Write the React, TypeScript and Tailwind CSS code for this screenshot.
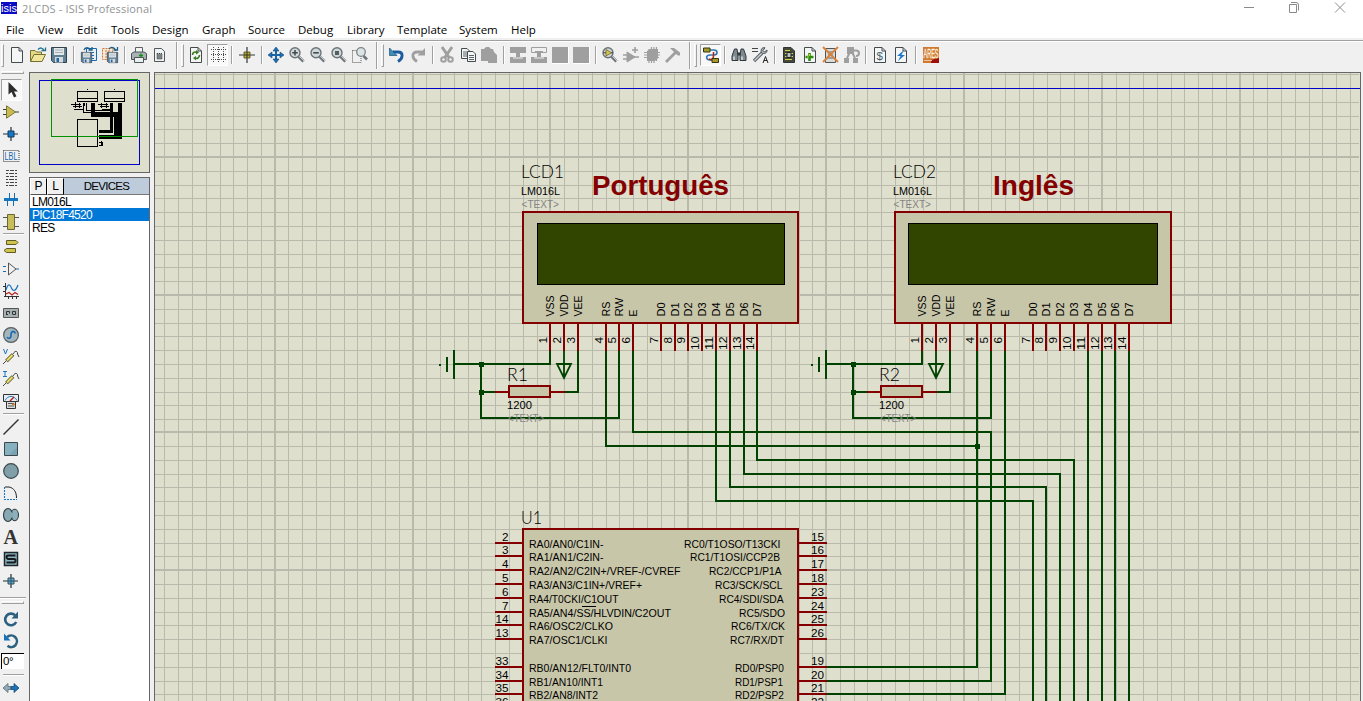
import React from "react";

type Kids = { children?: React.ReactNode };

/* ---------- icon helpers ---------- */

function Ic({ children }: Kids) {
  return (
    <svg className="block h-4 w-4 shrink-0 overflow-visible" viewBox="0 0 16 16" fill="none">
      {children}
    </svg>
  );
}

const page = "M2.5 .5H10L13.5 4V15.5H2.5Z";

function Page({ children }: Kids) {
  return (
    <Ic>
      <path d={page} fill="#f4f6f6" stroke="#444b4f" />
      <path d="M10 .5V4H13.5" stroke="#444b4f" />
      {children}
    </Ic>
  );
}

function Lens({ children }: Kids) {
  return (
    <Ic>
      <path d="M9.5 9.5L14.5 14.5" stroke="#6e7478" strokeWidth="3" />
      <path d="M10 9L15 14" stroke="#c9ced0" strokeWidth="1" />
      <circle cx="6" cy="5.8" r="5" fill="#cfd9db" stroke="#6c7377" strokeWidth="1.4" />
      {children}
    </Ic>
  );
}

function Disk({ x, y, s }: { x: number; y: number; s: number }) {
  return (
    <g transform={`translate(${x} ${y}) scale(${s / 16})`}>
      <path d="M.5 .5H15.5V15.5H2.5L.5 13.5Z" fill="#5f7f94" stroke="#33434e" />
      <path d="M3 1H13V8H3Z" fill="#e3e8ea" />
      <path d="M4 3H12M4 5.5H12" stroke="#a7b0b5" />
      <path d="M4 10H12V15.5H4Z" fill="#d5dadd" />
      <path d="M5.5 11H8V15H5.5Z" fill="#1d67a8" />
    </g>
  );
}

const G = "#9f9f9f";

const icons: Record<string, React.ReactNode> = {
  new: <Page />,
  open: (
    <Ic>
      <path d="M.5 14.5V3.5H5L6.5 5H11.5V8" fill="#e4d886" stroke="#77712f" />
      <path d="M.5 14.5L4 7.5H15.5L12 14.5Z" fill="#f0e59a" stroke="#77712f" />
      <path d="M8 2.5C10 .3 13 .5 14 3.5M11.5 3.5H15.5V.5" stroke="#22708e" strokeWidth="1.3" />
    </Ic>
  ),
  save: (
    <Ic>
      <Disk x={0} y={0} s={16} />
    </Ic>
  ),
  importSec: (
    <Ic>
      <path d="M5.500 1.500H15.500V13.500H5.500Z" fill="#e9f0f5" stroke="#1769b4" />
      <path d="M8 5.500H14M8 8.500H14M8 11.500H14" stroke="#1769b4" strokeDasharray="2 1" />
      <path d="M3 3C4 0 8 0 9.500 3M7.500 3H11V0" stroke="#1c5e86" strokeWidth="1.300" />
      <Disk x={0} y={5} s={11} />
    </Ic>
  ),
  exportSec: (
    <Ic>
      <path d="M.5 1.500H10.500V12.500H.5Z" fill="#f3e6da" stroke="#d6762c" strokeDasharray="2 1" />
      <path d="M3 4H9M3 7H9M3 10H9" stroke="#d6762c" strokeDasharray="2 1" />
      <path d="M7 2C9 -.5 13 0 13.500 4M11.500 3H15.500V0" stroke="#1c5e86" strokeWidth="1.300" />
      <Disk x={5} y={5} s={11} />
    </Ic>
  ),
  print: (
    <Ic>
      <path d="M4.500 6V.5H11.500V6" fill="#f3f5f5" stroke="#5a6165" />
      <path d="M.5 6.500L3 5H13L15.500 6.500V12.500H.5Z" fill="#a9b1b4" stroke="#4d5458" />
      <path d="M3.500 10.500H12.500V15.500H3.500Z" fill="#eceff0" stroke="#4d5458" />
      <path d="M10 6.500V10.500M8 8.500H12" stroke="#119011" strokeWidth="1.300" />
    </Ic>
  ),
  printArea: (
    <Ic>
      <path d="M2.500 1.500H9.500L12.500 4.500V14.500H2.500Z" fill="#eff2f2" stroke="#50575b" />
      <path d="M5 6.500H10V12H5Z" fill="#7c8588" stroke="#444" strokeDasharray="1 1" />
    </Ic>
  ),
  refresh: (
    <Page>
      <path d="M4.500 8C4.500 5 7 4.500 9 5.500M11.500 8C11.500 11 9 12 7 11" stroke="#3b7d1f" strokeWidth="1.600" />
      <path d="M8 3V7.500L11 5.500ZM8 9V13.500L5 11Z" fill="#3b7d1f" />
    </Page>
  ),
  grid: (
    <Ic>
      <path d="M1 2.500H16M1 7.500H16M1 12.500H16" stroke="#4a4a4a" strokeDasharray="1 1" />
      <path d="M3.500 0V16M8.500 0V16M13.500 0V16" stroke="#4a4a4a" strokeDasharray="1 1" />
    </Ic>
  ),
  origin: (
    <Ic>
      <path d="M8 0V16M0 8H16" stroke="#33363a" strokeWidth="1.200" />
      <path d="M5 5H11V11H5Z" fill="#b3a845" stroke="#655e26" />
      <path d="M8 5V11M5 8H11" stroke="#393715" />
    </Ic>
  ),
  pan: (
    <Ic>
      <path d="M8 1V15M1 8H15" stroke="#1867a8" strokeWidth="2" />
      <path d="M8 0L11 4H5ZM8 16L11 12H5ZM0 8L4 5V11ZM16 8L12 5V11Z" fill="#1e70b2" stroke="#174b78" strokeWidth=".6" />
    </Ic>
  ),
  zoomIn: (
    <Lens>
      <path d="M6 3V8.600M3.200 5.800H8.800" stroke="#444b50" strokeWidth="1.600" />
    </Lens>
  ),
  zoomOut: (
    <Lens>
      <path d="M3.200 5.800H8.800" stroke="#444b50" strokeWidth="1.600" />
    </Lens>
  ),
  zoomAll: (
    <Lens>
      <path d="M4 4H8V8H4Z" fill="#555d61" />
    </Lens>
  ),
  zoomArea: (
    <Ic>
      <path d="M.5 3.500H9V15.500H.5Z" stroke="#555" strokeDasharray="1 1" />
      <path d="M11.500 9L15 12.500" stroke="#6e7478" strokeWidth="2.600" />
      <circle cx="9" cy="5" r="4.300" fill="#dbe3e5" stroke="#7c8387" strokeWidth="1.300" />
    </Ic>
  ),
  undo: (
    <Ic>
      <path d="M4 5H9C14.500 5 14.500 11 9 14.500" stroke="#1b5da0" strokeWidth="2.800" />
      <path d="M.5 1V8.500H8Z" fill="#3f8fb8" stroke="#1b4f78" strokeWidth=".7" />
    </Ic>
  ),
  redo: (
    <Ic>
      <path d="M12 5H7C1.500 5 1.500 11 7 14.500" stroke={G} strokeWidth="2.800" />
      <path d="M15 1V8.500H7.500Z" fill={G} />
    </Ic>
  ),
  cut: (
    <Ic>
      <path d="M3 0L10.500 11M13 0L5.500 11" stroke={G} strokeWidth="3" />
      <circle cx="4.500" cy="12.500" r="2.300" stroke={G} strokeWidth="2" />
      <circle cx="11.500" cy="12.500" r="2.300" stroke={G} strokeWidth="2" />
    </Ic>
  ),
  copy: (
    <Ic>
      <path d="M1.500 1.500H7L9.500 4V11.500H1.500Z" fill="#f3f5f5" stroke="#444b4f" />
      <path d="M3 5H7M3 7H7M3 9H7" stroke="#5b6468" />
      <path d="M7.500 4.500H13L15.500 7V14.500H7.500Z" fill="#f3f5f5" stroke="#444b4f" />
      <path d="M9 8.500H14M9 10.500H14M9 12.500H14" stroke="#5b6468" />
    </Ic>
  ),
  paste: (
    <Ic>
      <path d="M0 2H3L5 0H8L10 2H12L13 5L16 8V16H7V14H0Z" fill={G} />
    </Ic>
  ),
  blockCopy: (
    <Ic>
      <path d="M0 0H16V6H10V10H16V16H0V10H6V6H0Z" fill={G} />
      <path d="M3 11H13" stroke="#f0f0f0" />
    </Ic>
  ),
  blockMove: (
    <Ic>
      <path d="M.5 .5H15.500V5.500H.5Z" stroke={G} />
      <path d="M4 4H12V6H10V10H16V16H0V10H6V6H4Z" fill={G} />
      <path d="M3 11H13" stroke="#f0f0f0" />
    </Ic>
  ),
  block: (
    <Ic>
      <path d="M0 0H16V16H0Z" fill={G} />
      <path d="M0 16.500H16.500V0" stroke="#fff" />
    </Ic>
  ),
  pick: (
    <Lens>
      <path d="M4 2.500V9L9.500 5.800Z" fill="#d5c94f" stroke="#6c6727" strokeWidth=".8" />
      <path d="M1 5.800H4M9 5.800H11" stroke="#444" />
    </Lens>
  ),
  make: (
    <Ic>
      <path d="M4 5V15L12 10Z" fill={G} stroke={G} />
      <path d="M0 8H4M0 12H4M11 10H16M12 0V6M9 3H15" stroke={G} strokeWidth="1.600" />
    </Ic>
  ),
  pack: (
    <Ic>
      <path d="M3 4L6 2H14V11L11 14H3Z" fill={G} />
      <path d="M5 2V16M7.500 0V16M10 0V16M12.500 0V14M0 5.500H16M0 8H16M0 10.500H15" stroke={G} strokeWidth="1.200" />
    </Ic>
  ),
  hammer: (
    <Ic>
      <path d="M1 15L11 5" stroke={G} strokeWidth="2.800" />
      <path d="M5 1H9L15 5.500V8.500H13L11 7L8 4Z" fill={G} />
    </Ic>
  ),
  wire: (
    <Ic>
      <path d="M7 3H11C15 3 15 8 11 8H7C2 8 3 13 7 13H9" stroke="#2f78b4" strokeWidth="1.600" />
      <path d="M10.500 5V9C10.500 12.500 8 13 6 12" stroke="#bd2418" strokeWidth="1.600" />
      <path d="M.5 1H7V5H.5ZM9 11.500H15.500V15.500H9Z" fill="#a49b2b" stroke="#38350d" />
    </Ic>
  ),
  find: (
    <Ic>
      <path d="M3.500 2H6L7 8V13.500H1V9ZM12.500 2H10L9 8V13.500H15V9Z" fill="#7f8a90" stroke="#30373b" />
      <path d="M6.500 5.500H9.500V8.500H6.500Z" fill="#30373b" />
      <path d="M3 9.500V13M11 9.500V13" stroke="#dce1e3" strokeWidth="1.500" />
    </Ic>
  ),
  property: (
    <Ic>
      <path d="M0 1.500H6M0 4.500H6" stroke="#444" />
      <path d="M2 14L10 6" stroke="#5c6468" strokeWidth="3.400" />
      <path d="M2.500 13.500L10 6" stroke="#cdd3d5" strokeWidth="1.200" />
      <path d="M13 .8C9.500 0 8.500 3 9.500 6C12 7.500 15.500 6 15 3L12.500 5L11 3.500Z" fill="#aab1b5" stroke="#4c5357" />
      <path d="M11 16L13.500 9.500L16 16M12 13.500H15" stroke="#222" />
    </Ic>
  ),
  explorer: (
    <Ic>
      <path d="M2.500 .5H10L13.500 4V15.500H2.500Z" fill="#444a3a" stroke="#2e3335" />
      <path d="M4 3.500H9M4 6.500H6M4 9.500H6M4 12.500H11M10 6.500H12M10 9.500H12" stroke="#dccf4b" />
      <path d="M6 5.500H10V10.500H6Z" fill="#b8c3c8" stroke="#202426" />
    </Ic>
  ),
  newSheet: (
    <Page>
      <path d="M7.500 6V14M3.500 10H11.500" stroke="#2a8d12" strokeWidth="2.600" />
      <path d="M7.500 7V9M5 10H7" stroke="#d6cf2a" strokeWidth="1.200" />
    </Page>
  ),
  delSheet: (
    <Ic>
      <path d="M2.500 1.500H12.500V15.500H2.500Z" fill="#d7dbdc" stroke="#50575b" />
      <path d="M5 5H10M5 8H10M5 11H10" stroke="#666" />
      <path d="M0 0L15 15M15 0L0 15" stroke="#d9823b" strokeWidth="1.900" />
    </Ic>
  ),
  parent: (
    <Ic>
      <path d="M3 0H10V7H3ZM0 11H5V16H0ZM9 11H14V16H9Z" fill={G} />
      <path d="M10 3.500H12C16 3.500 16 9 12 9M6 5L3 11M8 5L11 11" stroke={G} strokeWidth="2" />
    </Ic>
  ),
  bom: (
    <Page>
      <text x="4.500" y="12.500" fontSize="11.500" fontFamily="Liberation Sans" fill="#43616e">$</text>
    </Page>
  ),
  erc: (
    <Page>
      <path d="M11 3L4 9H7.500L5 14L12 8H8.500Z" fill="#1f79c6" />
    </Page>
  ),
  ares: (
    <Ic>
      <path d="M0 0H16V16H0Z" fill="#cf7a30" />
      <path d="M8 16V13L16 11V16Z" fill="#9d0f0b" />
      <text x=".6" y="11" fontSize="12" textLength="14.800" lengthAdjust="spacingAndGlyphs" fontFamily="Liberation Sans" fill="#fff3e0" stroke="#fff3e0" strokeWidth=".3">ARES</text>
      <path d="M1 13.500H9" stroke="#f0c79d" />
    </Ic>
  ),
  /* mode column */
  select: (
    <Ic>
      <path d="M4.500 0V12.500L7.500 10L10 15.500L12.500 14.300L10 9.500H14Z" fill="#2c2c2e" />
    </Ic>
  ),
  component: (
    <Ic>
      <path d="M0 5.500H4M0 10.500H4M12 8H16" stroke="#3c3c30" />
      <path d="M3.500 1.800V14.200L12.500 8Z" fill="#c9bd50" stroke="#7d7538" />
    </Ic>
  ),
  junction: (
    <Ic>
      <path d="M8 1V15M0 8H15" stroke="#262d33" strokeWidth="1.200" />
      <path d="M5 5H11V11H5Z" fill="#1578c4" stroke="#153b5c" />
    </Ic>
  ),
  label: (
    <Ic>
      <path d="M.5 2.500H16V13.500H.5Z" stroke="#333" strokeDasharray="1 1" />
      <text x="1.500" y="12" fontSize="10.500" textLength="13" lengthAdjust="spacingAndGlyphs" fontFamily="Liberation Sans" fill="#1467ad">LBL</text>
    </Ic>
  ),
  script: (
    <Ic>
      <path d="M3 .5H14M3 6.500H14M3 12.500H14" stroke="#444" strokeDasharray="3 1 4 1" />
      <path d="M3 3.500H14M3 9.500H14M3 15.500H14" stroke="#444" strokeDasharray="2 1 5 1" />
    </Ic>
  ),
  bus: (
    <Ic>
      <path d="M1 7.500H15" stroke="#1578c4" strokeWidth="3" />
      <path d="M6.500 1V8M11.500 1V8M4.500 8V14M10.500 8V14" stroke="#1b6ca9" />
    </Ic>
  ),
  subcircuit: (
    <Ic>
      <path d="M0 3.500H4M0 12.500H4M12 3.500H16M12 12.500H16" stroke="#555" />
      <path d="M4.500 .5H11.500V15.500H4.500Z" fill="#c7bd5a" stroke="#6d6733" />
    </Ic>
  ),
  terminal: (
    <Ic>
      <path d="M3.500 1.500H13L15 3.500L13 5.500H3.500ZM12.500 9.500H3.500L1 11.500L3.500 13.500H12.500Z" fill="#cfc448" stroke="#5f5a2c" />
    </Ic>
  ),
  pin: (
    <Ic>
      <path d="M0 5.500H3M0 10.500H3M13 8H16" stroke="#1b6ca9" strokeWidth="1.200" />
      <path d="M5.500 2V14L13 8Z" stroke="#555" />
    </Ic>
  ),
  graph: (
    <Ic>
      <path d="M2.500 0V14M1 13.500H16M0 3.500H2M0 8.500H2M5.500 14V16M9.500 14V16M13.500 14V16" stroke="#333" />
      <path d="M3 7C5 0 7 1 8.500 5S13 8 15 2" stroke="#1a75c2" strokeWidth="1.200" />
      <path d="M3 11L6 9.500L9 12L12 9.500L15 11.500" stroke="#b32121" strokeWidth="1.200" />
    </Ic>
  ),
  tape: (
    <Ic>
      <path d="M.5 3.500H15.500V12.500H.5Z" fill="#a7aeb0" stroke="#555" />
      <path d="M3.500 9.500V6.500H6.500V8.500M9.500 9.500V6.500H12.500V9.500H10M5 9.500H3" stroke="#2f3335" />
    </Ic>
  ),
  generator: (
    <Ic>
      <circle cx="8" cy="8" r="7.400" fill="#a3b4bb" stroke="#555e63" strokeWidth="1.200" />
      <path d="M4 10C5 12 8 12 8 8S11 3 12.500 6.500" stroke="#1769b4" strokeWidth="1.600" />
    </Ic>
  ),
  vprobe: (
    <Ic>
      <path d="M.5 0L2.500 5L4.500 0" stroke="#1a75c2" />
      <path d="M0 15L3 12M10 5C12 1 15 2 14.500 5L16 8" stroke="#444" />
      <path d="M3.500 12L10 5.500" stroke="#56522c" strokeWidth="3.800" />
      <path d="M4 11.500L9.500 6" stroke="#e8df68" strokeWidth="2.200" />
    </Ic>
  ),
  iprobe: (
    <Ic>
      <path d="M0 .5H4M2 0V5M0 5.500H4" stroke="#1a75c2" />
      <path d="M0 15L3 12M10 5C12 1 15 2 14.500 5L16 8" stroke="#444" />
      <path d="M3.500 12L10 5.500" stroke="#56522c" strokeWidth="3.800" />
      <path d="M4 11.500L9.500 6" stroke="#e8df68" strokeWidth="2.200" />
    </Ic>
  ),
  instrument: (
    <Ic>
      <path d="M.5 1.500H15.500V8.500H.5Z" fill="#e7edf0" stroke="#333" />
      <path d="M2 7.500C5 2 11 2 14 7.500" stroke="#2b78bb" />
      <path d="M7 8L11 4" stroke="#b32121" strokeWidth="1.400" />
      <path d="M3.500 8.500H12.500V15.500H3.500Z" fill="#d8dcdd" stroke="#333" />
      <path d="M5 10.500H11M5 13H11" stroke="#555" />
      <path d="M9 11.500H12" stroke="#df8527" strokeWidth="1.500" />
    </Ic>
  ),
  line: (
    <Ic>
      <path d="M.5 15.500L15.500 .5" stroke="#333" strokeWidth="1.500" />
    </Ic>
  ),
  box: (
    <Ic>
      <path d="M1.500 1.500H14.500V14.500H1.500Z" fill="#86b1bf" stroke="#3c484d" />
      <path d="M6 14L14 6V14Z" fill="#79a3b0" />
    </Ic>
  ),
  circle: (
    <Ic>
      <circle cx="8" cy="8" r="7.300" fill="#819fa8" stroke="#3c484d" strokeWidth="1.200" />
    </Ic>
  ),
  arc: (
    <Ic>
      <path d="M1.500 2V14.500H14" stroke="#1a75c2" strokeDasharray="2 1" strokeWidth="1.100" />
      <path d="M2 2H6C11 3 13.500 7 13.500 13" stroke="#222" />
    </Ic>
  ),
  path: (
    <Ic>
      <ellipse cx="11.700" cy="8" rx="3.800" ry="5.700" fill="#8cb1bc" stroke="#333c40" strokeWidth="1.100" />
      <ellipse cx="5" cy="8" rx="4.500" ry="6.500" fill="#86a9b3" stroke="#333c40" strokeWidth="1.100" />
      <path d="M8 5.500H10V10.500H8Z" fill="#86a9b3" />
    </Ic>
  ),
  text: (
    <Ic>
      <text x=".5" y="15" fontSize="20" fontWeight="700" textLength="14.500" lengthAdjust="spacingAndGlyphs" fontFamily="Liberation Serif" fill="#333">A</text>
    </Ic>
  ),
  symbol: (
    <Ic>
      <path d="M1.500 1.500H14.500V14.500H1.500Z" fill="#8ab4c1" stroke="#1e2629" strokeWidth="1.500" />
      <path d="M12.500 4.500H5Q3.500 4.500 3.500 6T5 8H11Q12.500 8 12.500 9.800T11 11.500H3.500" stroke="#15191b" strokeWidth="2" />
    </Ic>
  ),
  marker: (
    <Ic>
      <path d="M8 1V15M0 8H15" stroke="#262d33" strokeWidth="1.200" />
      <path d="M5 5H11V11H5Z" fill="#6ba5bd" stroke="#355262" />
      <path d="M8 5V11M5 8H11" stroke="#1e5676" />
    </Ic>
  ),
  rotCw: (
    <Ic>
      <path d="M12 4.200A5.800 5.800 0 1 0 13.200 11" stroke="#2b6080" strokeWidth="2.600" />
      <path d="M15 .5V7.500H8.500Z" fill="#2b6080" />
    </Ic>
  ),
  rotCcw: (
    <Ic>
      <path d="M4 4.200A5.800 5.800 0 1 1 4.500 12.800" stroke="#2b6080" strokeWidth="2.600" />
      <path d="M1 .5V7.500H7.500Z" fill="#1b71b8" />
    </Ic>
  ),
  flip: (
    <Ic>
      <path d="M0 8L5 3.500V6.500H8V9.500H5V12.500Z" fill="#90a9b5" stroke="#5b6e77" strokeWidth=".8" />
      <path d="M16 8L11 3.500V6.500H8V9.500H11V12.500Z" fill="#1b71b8" stroke="#174b78" strokeWidth=".8" />
    </Ic>
  ),
};

const pressed = "-my-[3px] flex h-[22px] w-[21px] items-center justify-center border border-t-[#a0a0a0] border-l-[#a0a0a0] border-r-white border-b-white bg-[#f8f8f8]";

function Group({ names, on }: { names: string[]; on?: string }) {
  return (
    <div className="flex shrink-0 items-center gap-[5px]">
      {names.map((n, i) =>
        n === on ? (
          <div key={i} className="-mr-[3px] -ml-[2px]">
            <div className={pressed}>{icons[n]}</div>
          </div>
        ) : (
          <React.Fragment key={i}>{icons[n]}</React.Fragment>
        ),
      )}
    </div>
  );
}

function Sep({ w }: { w: string }) {
  return (
    <div className={`flex shrink-0 justify-center ${w}`}>
      <div className="h-[18px] w-[2px] border-r border-white bg-[#a0a0a0]" />
    </div>
  );
}

function Break({ w }: { w: string }) {
  return (
    <div className={`flex shrink-0 items-center pl-[8px] ${w}`}>
      <div className="h-[27px] w-[2px] border-r border-white bg-[#a0a0a0]" />
      <div className="ml-[3px] h-[23px] w-[3px] border border-t-white border-l-white border-r-[#a0a0a0] border-b-[#a0a0a0]" />
    </div>
  );
}

function Toolbar() {
  return (
    <div className="flex h-[29px] shrink-0 items-center pb-[3px]">
      <div className="mr-[5px] ml-px h-[23px] w-[3px] shrink-0 border border-t-white border-l-white border-r-[#a0a0a0] border-b-[#a0a0a0]" />
      <Group names={["new", "open", "save"]} />
      <Sep w="w-[14px]" />
      <Group names={["importSec", "exportSec"]} />
      <Sep w="w-[13px]" />
      <Group names={["print", "printArea"]} />
      <Break w="w-[20px]" />
      <Group names={["refresh", "grid"]} on="grid" />
      <Sep w="w-[14px]" />
      <Group names={["origin"]} />
      <Sep w="w-[13px]" />
      <Group names={["pan", "zoomIn", "zoomOut", "zoomAll", "zoomArea"]} />
      <Break w="w-[21px]" />
      <Group names={["undo", "redo"]} />
      <Sep w="w-[13px]" />
      <Group names={["cut", "copy", "paste"]} />
      <Sep w="w-[13px]" />
      <Group names={["blockCopy", "blockMove", "block", "block"]} />
      <Sep w="w-[13px]" />
      <Group names={["pick", "make", "pack", "hammer"]} />
      <Break w="w-[21px]" />
      <Group names={["wire"]} on="wire" />
      <Sep w="w-[13px]" />
      <Group names={["find", "property"]} />
      <Sep w="w-[13px]" />
      <Group names={["explorer", "newSheet", "delSheet", "parent"]} />
      <Sep w="w-[12px]" />
      <Group names={["bom", "erc"]} />
      <Sep w="w-[14px]" />
      <Group names={["ares"]} />
    </div>
  );
}

function Modes({ names, on }: { names: string[]; on?: string }) {
  return (
    <div className="flex shrink-0 flex-col">
      {names.map((n) => (
        <div key={n} className="flex h-[22px] w-[23px] shrink-0 items-center pl-[3px]">
          {n === on ? <div className="-ml-[2px]"><div className={pressed}>{icons[n]}</div></div> : icons[n]}
        </div>
      ))}
    </div>
  );
}

function Rule() {
  return <div className="ml-[3px] h-[2px] w-[21px] shrink-0 border-t border-[#a0a0a0] bg-white" />;
}

function ModeBar() {
  return (
    <div className="flex w-[29px] shrink-0 flex-col">
      <div className="-mt-px mb-[5px] ml-px h-[3px] w-[23px] shrink-0 border border-t-white border-l-white border-r-[#a0a0a0] border-b-[#a0a0a0]" />
      <Modes names={["select", "component", "junction", "label", "script", "bus", "subcircuit"]} on="select" />
      <div className="h-[3px] shrink-0"><Rule /></div>
      <Modes names={["terminal", "pin", "graph", "tape", "generator", "vprobe", "iprobe", "instrument"]} />
      <div className="h-[4px] shrink-0 pt-px"><Rule /></div>
      <Modes names={["line", "box", "circle", "arc", "path", "text", "symbol", "marker"]} />
      <div className="flex h-[16px] shrink-0 flex-col pt-[5px]">
        <div className="h-[2px] w-[26px] border-b border-white bg-[#a0a0a0]" />
        <div className="mt-[2px] ml-px h-[3px] w-[23px] border border-t-white border-l-white border-r-[#a0a0a0] border-b-[#a0a0a0]" />
      </div>
      <Modes names={["rotCw", "rotCcw"]} />
      <div className="mt-px ml-px flex h-[16px] w-[23px] shrink-0 items-center border-t border-l border-black bg-white pl-px font-['Liberation_Sans'] text-[11.5px] leading-none tracking-[-0.5px] text-black">
        0°
      </div>
      <div className="h-[8px] shrink-0 pt-[5px]"><Rule /></div>
      <Modes names={["flip"]} />
    </div>
  );
}

function Overview() {
  return (
    <div className="h-[101px] w-[121px] shrink-0 border border-[#666] bg-[#dfdfcd]">
      <svg className="block h-[99px] w-[119px]" viewBox="30 73 119 99" shapeRendering="crispEdges" fill="none">
        <path d="M39.500 80.500H139.500V164.500H39.500Z" stroke="#0000c8" />
        <g stroke="#000">
          <path d="M77.500 91.500H97.500V101.500H77.500ZM104.500 91.500H124.500V101.500H104.500ZM77 98.500H98M104 98.500H125M77.500 119.500H97.500V146.500H77.500Z" />
          <path d="M87 89.500H88M114 89.500H115M71 104.500H81M73 106.500H82M74 109.500H83M98 104.500H108M100 106.500H109M102 109.500H110M83.500 103V112.500H113M86 103V110.500H110M84.500 103V106M79.500 103V108M75.500 102V108M101.500 103V108M106.500 103V108" />
          <path d="M99 142.500H102V145.500H99M101 141V145" />
        </g>
        <g fill="#000">
          <path d="M91 103H95V112H118V103H122V139H99V135H114V133H99V130H110V117H91Z" />
          <path d="M110 103H113V133H110Z" />
        </g>
        <path d="M113.500 117V134" stroke="#dfdfcd" />
        <path d="M51.500 79.500H137.500V136.500H51.500Z" stroke="#009000" />
      </svg>
    </div>
  );
}

function Devices() {
  return (
    <div className="mt-[4px] flex w-[121px] grow flex-col border-x border-t border-[#666] bg-white font-['Liberation_Sans'] text-[12px] text-black">
      <div className="flex h-[17px] shrink-0 bg-[#bdcbda] leading-[15px]">
        {["P", "L"].map((t) => (
          <div key={t} className="w-[17px] shrink-0 border border-t-white border-l-white border-r-black border-b-[#555] bg-[#f0f0f0] text-center">
            {t}
          </div>
        ))}
        <div className="grow border-b border-[#777] text-center text-[11.5px] leading-[16px] tracking-[-0.7px]">DEVICES</div>
      </div>
      <div className="text-[12px] leading-[14px] tracking-[-0.75px]">
        <div className="h-[13px] pl-[2px]">LM016L</div>
        <div className="h-[13px] bg-[#0078d7] pl-[2px] text-white">PIC18F4520</div>
        <div className="h-[13px] pl-[2px]">RES</div>
      </div>
    </div>
  );
}

/* ---------- schematic ---------- */

const GX0 = 550.87;
const GXS = 13.785;
const gridX = Array.from({ length: 88 }, (_, i) => i - 28).map((k) => ({ k, x: Math.floor(GX0 + k * GXS) }));
const gridY = [
  74, 88, 102, 116, 129, 143, 157, 171, 185, 198, 212, 226, 240, 254, 267, 281, 295, 309, 323, 336, 350, 364, 378,
  392, 405, 419, 432, 446, 460, 474, 487, 501, 515, 529, 543, 556, 570, 584, 598, 612, 625, 639, 653, 667, 681, 694,
];

function T({ x, y, x2, s = 11, fill = "#000", up, bold, thin, children }: {
  x: number; y: number; x2: number; s?: number; fill?: string; up?: boolean; bold?: boolean; thin?: boolean; children: string;
}) {
  return (
    <text
      x={x}
      y={y}
      fontSize={s}
      fill={fill}
      fontFamily={thin ? "Lato, 'Liberation Sans', sans-serif" : undefined}
      fontWeight={bold ? 700 : thin ? 300 : 400}
      textLength={x2 - x}
      lengthAdjust="spacingAndGlyphs"
      transform={up ? `rotate(-90 ${x} ${y})` : undefined}
    >
      {children}
    </text>
  );
}

const pinNames = ["VSS", "VDD", "VEE", "RS", "RW", "E", "D0", "D1", "D2", "D3", "D4", "D5", "D6", "D7"];
const nameLen = [21, 22, 21, 15, 19, 7, 14, 14, 14, 14, 14, 14, 14, 14];

function Lcd({ pins, left, right, s1, s2, id, title, tx, tx2 }: {
  pins: number[]; left: number; right: number; s1: number; s2: number; id: string; title: string; tx: number; tx2: number;
}) {
  const o = pins[0];
  const tl = o - 28;
  return (
    <g>
      <rect x={left} y={212} width={right - left} height={111} fill="#c8c6a9" stroke="#840000" strokeWidth={2} />
      <rect x={s1 + 0.5} y={223.5} width={s2 - s1 - 1} height={61} fill="#314500" stroke="#000" />
      {pins.map((p, i) => (
        <g key={p}>
          <path d={`M${p} 324V351`} stroke="#840000" strokeWidth={2} />
          <T up x={p + 4} y={316.5} x2={p + 4 + nameLen[i]}>{pinNames[i]}</T>
          <T up x={p - 3} y={i > 8 ? 350 : 343.5} x2={p - 3 + (i > 8 ? 13.5 : 6.5)} s={11.5}>{String(i + 1)}</T>
        </g>
      ))}
      <T x={tl - 1} y={178} x2={tl + 42} s={17} thin>{"LCD" + id}</T>
      <T x={tl - 1} y={195} x2={tl + 38} s={11}>LM016L</T>
      <T x={tl - 0.5} y={208} x2={tl + 37} s={10.5} fill="#848484">{"<TEXT>"}</T>
      <T x={tx} y={195} x2={tx2} s={27.5} fill="#840000" bold>{title}</T>
      <g stroke="#004200" strokeWidth={2}>
        <path d={`M${o} 351V364H${o - 96}M${o - 96} 350V379M${o - 103} 357V372M${o - 111} 364.5H${o - 109}`} />
        <path d={`M${o - 69} 364V418H${pins[4]}V351M${o - 69} 392H${o - 55}M${o + 14} 392H${pins[2]}V351`} />
        <path d={`M${o + 14} 351V377M${o + 7} 364H${o + 21}L${o + 14} 378Z`} shapeRendering="auto" strokeWidth={1.8} />
      </g>
      <path d={`M${o - 55} 392H${o - 42}M${o + 1} 392H${o + 15}`} stroke="#840000" strokeWidth={2} />
      <rect x={o - 41} y={386} width={41} height={11} fill="#c8c6a9" stroke="#840000" strokeWidth={2} />
      <path d={`M${o - 71} 362h5v5h-5zM${o - 71} 390h5v5h-5z`} fill="#004200" />
      <T x={o - 43} y={381} x2={o - 22} s={17} thin>{"R" + id}</T>
      <T x={o - 43} y={409} x2={o - 18} s={11.5}>1200</T>
      <T x={o - 42} y={422} x2={o - 6} s={10.5} fill="#848484">{"<TEXT>"}</T>
    </g>
  );
}

const rows: [number, string, string, number, string, string, number, number][] = [
  [543, "2", "RA0/AN0/C1IN-", 603.5, "15", "RC0/T1OSO/T13CKI", 684, 780.5],
  [556, "3", "RA1/AN1/C2IN-", 603.5, "16", "RC1/T1OSI/CCP2B", 690, 780],
  [570, "4", "RA2/AN2/C2IN+/VREF-/CVREF", 680.5, "17", "RC2/CCP1/P1A", 709, 781.5],
  [584, "5", "RA3/AN3/C1IN+/VREF+", 642, "18", "RC3/SCK/SCL", 715, 782.5],
  [598, "6", "RA4/T0CKI/C1OUT", 618.5, "23", "RC4/SDI/SDA", 719, 783.5],
  [612, "7", "RA5/AN4/SS/HLVDIN/C2OUT", 671, "24", "RC5/SDO", 739, 785],
  [625, "14", "RA6/OSC2/CLKO", 613, "25", "RC6/TX/CK", 731, 785],
  [639, "13", "RA7/OSC1/CLKI", 607.5, "26", "RC7/RX/DT", 730, 784],
  [667, "33", "RB0/AN12/FLT0/INT0", 631, "19", "RD0/PSP0", 735, 784],
  [681, "34", "RB1/AN10/INT1", 603, "20", "RD1/PSP1", 735, 783],
  [694, "35", "RB2/AN8/INT2", 598, "21", "RD2/PSP2", 735, 784],
  [708, "36", "", 0, "22", "", 0, 0],
];

function Schematic() {
  return (
    <svg
      className="block h-full w-full"
      viewBox="155 73 1205 628"
      preserveAspectRatio="xMinYMin meet"
      fill="none"
      fontFamily="'Liberation Sans', Arial, sans-serif"
      shapeRendering="crispEdges"
    >
      <g fill="#b9baab">
        {gridX.map(({ k, x }) => (
          <rect key={k} x={k % 10 === 0 ? x - 1 : x} y={73} width={k % 10 === 0 ? 2 : 1} height={628} />
        ))}
        {gridY.map((y, i) => (
          <rect key={y} x={155} y={i % 10 === 6 ? y - 1 : y} width={1204} height={i % 10 === 6 ? 2 : 1} />
        ))}
      </g>
      <path d="M155 88.500H1360" stroke="#0000c8" />
      <Lcd
        id="1" title="Português" tx={592} tx2={729} left={523} right={798} s1={537} s2={785}
        pins={[550, 564, 578, 606, 619, 633, 661, 675, 688, 702, 716, 730, 744, 757]}
      />
      <Lcd
        id="2" title="Inglês" tx={993} tx2={1074} left={895} right={1171} s1={908} s2={1158}
        pins={[922, 936, 950, 977, 991, 1005, 1033, 1046, 1060, 1074, 1088, 1102, 1115, 1129]}
      />
      <g stroke="#004200" strokeWidth={2}>
        <path d="M606 351V446H977M633 351V432H991V681H826M977 351V667H826M1005 351V694H826" />
        <path d="M716 351V501H1033V701M730 351V487H1046V701M744 351V474H1060V701M757 351V460H1074V701" />
        <path d="M1088 351V701M1102 351V701M1115 351V701M1129 351V701" />
      </g>
      <path d="M975 444h5v5h-5z" fill="#004200" />
      <rect x={523} y={529} width={275} height={200} fill="#c8c6a9" stroke="#840000" strokeWidth={2} />
      <T x={521} y={524} x2={542} s={17} thin>U1</T>
      <path d="M581.500 606.500H596" stroke="#000" />
      {rows.map(([y, ln, lt, le, rn, rt, rs, re]) => (
        <g key={y}>
          <path d={`M495 ${y}H522M799 ${y}H827`} stroke="#840000" strokeWidth={2} />
          <T x={ln.length > 1 ? 495.5 : 502} y={y - 2} x2={508.5} s={11.5}>{ln}</T>
          <T x={811} y={y - 2} x2={824} s={11.5}>{rn}</T>
          {lt && <T x={529} y={y + 5} x2={le}>{lt}</T>}
          {rt && <T x={rs} y={y + 5} x2={re}>{rt}</T>}
        </g>
      ))}
    </svg>
  );
}

/* ---------- window ---------- */

const menu: [string, string][] = [
  ["File", "w-[32px]"],
  ["View", "w-[39px]"],
  ["Edit", "w-[34px]"],
  ["Tools", "w-[41px]"],
  ["Design", "w-[50px]"],
  ["Graph", "w-[46px]"],
  ["Source", "w-[50px]"],
  ["Debug", "w-[49px]"],
  ["Library", "w-[50px]"],
  ["Template", "w-[62px]"],
  ["System", "w-[52px]"],
  ["Help", "w-[40px]"],
];

export default function App() {
  return (
    <div className="flex h-[701px] w-[1363px] flex-col overflow-hidden bg-[#f0f0f0] font-['Open_Sans',sans-serif]">
      <div className="flex h-[18px] shrink-0 items-center bg-white">
        <div className="-mt-[2px] ml-px flex h-[12px] w-[16px] items-center justify-center bg-[#0a0ac4] font-['Liberation_Sans'] text-[11px] leading-none text-white">
          isis
        </div>
        <div className="ml-[5px] grow text-[11px] leading-[18px] tracking-[0.15px] whitespace-nowrap text-[#8f9494]">2LCDS - ISIS Professional</div>
        <svg className="mr-[17px] block h-[14px] w-[103px]" viewBox="0 0 103 14" fill="none" stroke="#8a8a8a">
          <path d="M1 5.500H11" />
          <path d="M46.500 2.500H53.500V10.500H46.500ZM48 .5H53Q55.500 .5 55.500 3V8.500" />
          <path d="M92 .5L102 10.500M102 .5L92 10.500" />
        </svg>
      </div>
      <div className="flex h-[20px] shrink-0 bg-white pb-[2px] pl-[6px] text-[11.5px] leading-[23px] text-black">
        {menu.map(([t, w]) => (
          <div key={t} className={`shrink-0 ${w}`}>{t}</div>
        ))}
      </div>
      <div className="h-[4px] shrink-0 border-b border-white pt-[2px]">
        <div className="h-px bg-[#a0a0a0]" />
      </div>
      <Toolbar />
      <div className="flex min-h-0 grow pt-px">
        <ModeBar />
        <div className="flex shrink-0 flex-col">
          <Overview />
          <Devices />
        </div>
        <div className="ml-[4px] h-full w-[1207px] shrink-0 overflow-hidden border border-b-0 border-[#666] bg-[#dfdfcd]">
          <Schematic />
        </div>
      </div>
    </div>
  );
}
